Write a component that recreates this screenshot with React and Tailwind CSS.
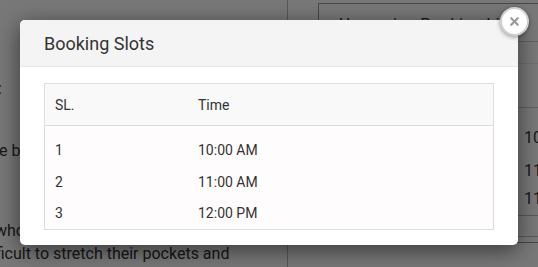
import { X } from "lucide-react";

const slots = [
  { sl: "1", time: "10:00 AM" },
  { sl: "2", time: "11:00 AM" },
  { sl: "3", time: "12:00 PM" },
];

const BackgroundPage = () => {
  return (
    <div className="flex h-[267px] w-[538px] overflow-hidden bg-white text-[16px] text-[#333]">
      <div className="w-[287px] shrink-0">
        <p className="mt-[77px] -ml-[35px]">Date:</p>
        <p className="mt-[38px] -ml-[19px] whitespace-nowrap">one be booked</p>
        <p className="mt-[56px] -ml-[5px] whitespace-nowrap">who</p>
        <p className="-ml-[22px] leading-[21px] whitespace-nowrap">difficult to stretch their pockets and</p>
      </div>
      <div className="flex-1 border-l border-[#bbb] pl-[30px] pt-[3px]">
        <div className="h-[240px] w-[260px] border border-[#999]">
          <div className="flex h-[38px] items-center border-b border-[#ccc] pl-[20px] pt-[4px] text-[17px] whitespace-nowrap">
            Upcoming Booking List
          </div>
          <div className="h-[22px] border-b border-[#e8e8e8]" />
          <div className="h-[44px] border-b border-[#ccc]" />
          <div className="pl-[205px] text-[16px]">
            <div className="flex h-[52px] items-center pt-[8px]">10:00</div>
            <div className="flex h-[20px] items-center pt-[2px]">11:00</div>
            <div className="flex h-[30px] items-center pt-[8px]">11:30</div>
          </div>
          <div className="mt-[5px] border-b border-[#bbb]" />
          <div className="mt-[20px] border-b border-[#bbb]" />
        </div>
      </div>
    </div>
  );
};

const BookingSlotsModal = () => {
  return (
    <div className="relative h-[225px] w-[498px] rounded-[5px] bg-white shadow-[0_5px_22px_rgba(0,0,0,0.55)]">
      <div className="flex h-[47px] items-center rounded-t-[5px] border-b border-[#e8e8e8] bg-[#f4f4f4] pl-[24px]">
        <h4 className="pt-[1px] text-[18px] text-[#333]">Booking Slots</h4>
      </div>
      <div className="px-[24px] pt-[16px]">
        <div className="h-[147px] border border-[#dddddd] bg-[#fffcfd] text-[14px] text-[#333]">
          <div className="flex h-[42px] items-center border-b border-[#dddddd] bg-[#f9f9f9] pt-[2px]">
            <span className="w-[153px] pl-[10px]">SL.</span>
            <span>Time</span>
          </div>
          <div className="pt-[9px]">
            {slots.map((slot) => (
              <div key={slot.sl} className="flex h-[31.5px] items-center">
                <span className="w-[153px] pl-[10px]">{slot.sl}</span>
                <span>{slot.time}</span>
              </div>
            ))}
          </div>
        </div>
      </div>
      <button className="absolute -right-[11px] -top-[13px] flex h-[29px] w-[29px] items-center justify-center rounded-full border-2 border-[#d0d0d0] bg-white shadow-[0_1px_4px_rgba(0,0,0,0.4)]">
        <X className="h-[13px] w-[13px] text-[#999]" strokeWidth={4} />
      </button>
    </div>
  );
};

export default function App() {
  return (
    <div className="relative h-[267px] w-[538px] overflow-hidden font-['Roboto',sans-serif]">
      <BackgroundPage />
      <div className="absolute inset-0 bg-[rgba(0,0,0,0.53)] pl-[20px] pt-[20px]">
        <BookingSlotsModal />
      </div>
    </div>
  );
}
